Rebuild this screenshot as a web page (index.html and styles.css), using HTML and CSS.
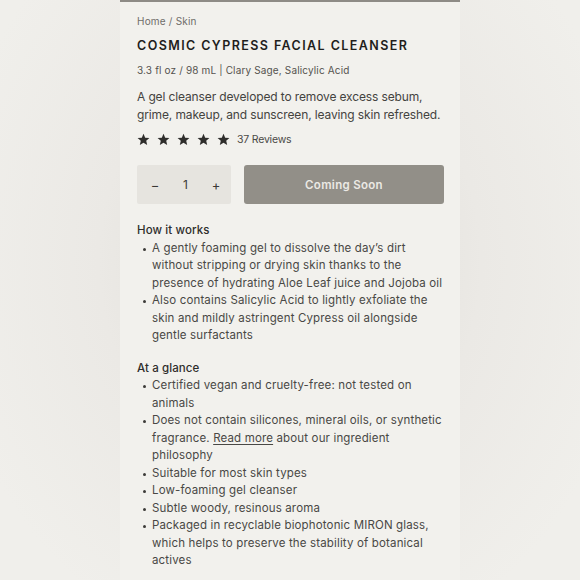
FILE: index.html
```html
<!DOCTYPE html>
<html lang="en">
<head>
<meta charset="utf-8">
<title>Cosmic Cypress Facial Cleanser</title>
<link rel="stylesheet" href="styles.css">
</head>
<body>
<main class="page">
  <div class="topbar"></div>
  <section class="product">
    <nav class="crumbs"><span>Home</span> / <span>Skin</span></nav>
    <h1 class="title">COSMIC CYPRESS FACIAL CLEANSER</h1>
    <p class="spec">3.3 fl oz / 98 mL | Clary Sage, Salicylic Acid</p>
    <p class="desc">A gel cleanser developed to remove excess sebum, grime, makeup, and sunscreen, leaving skin refreshed.</p>
    <div class="rating">
      <div class="stars">
        <svg viewBox="0 0 24 24"><path d="M12 1.5l3.1 7.2 7.8.6-5.9 5.1 1.8 7.6L12 18l-6.8 4 1.8-7.6-5.9-5.1 7.8-.6z"/></svg>
        <svg viewBox="0 0 24 24"><path d="M12 1.5l3.1 7.2 7.8.6-5.9 5.1 1.8 7.6L12 18l-6.8 4 1.8-7.6-5.9-5.1 7.8-.6z"/></svg>
        <svg viewBox="0 0 24 24"><path d="M12 1.5l3.1 7.2 7.8.6-5.9 5.1 1.8 7.6L12 18l-6.8 4 1.8-7.6-5.9-5.1 7.8-.6z"/></svg>
        <svg viewBox="0 0 24 24"><path d="M12 1.5l3.1 7.2 7.8.6-5.9 5.1 1.8 7.6L12 18l-6.8 4 1.8-7.6-5.9-5.1 7.8-.6z"/></svg>
        <svg viewBox="0 0 24 24"><path d="M12 1.5l3.1 7.2 7.8.6-5.9 5.1 1.8 7.6L12 18l-6.8 4 1.8-7.6-5.9-5.1 7.8-.6z"/></svg>
      </div>
      <span class="reviews">37 Reviews</span>
    </div>
    <div class="buy">
      <div class="qty">
        <span class="qbtn">&minus;</span>
        <span class="qval">1</span>
        <span class="qbtn">+</span>
      </div>
      <button class="cta">Coming Soon</button>
    </div>
    <h2 class="head">How it works</h2>
    <ul class="list">
      <li>A gently foaming gel to dissolve the day’s dirt without stripping or drying skin thanks to the presence of hydrating Aloe Leaf juice and Jojoba oil</li>
      <li>Also contains Salicylic Acid to lightly exfoliate the skin and mildly astringent Cypress oil alongside gentle surfactants</li>
    </ul>
    <h2 class="head head2">At a glance</h2>
    <ul class="list">
      <li>Certified vegan and cruelty-free: not tested on animals</li>
      <li>Does not contain silicones, mineral oils, or synthetic fragrance. <a class="link">Read more</a> about our ingredient philosophy</li>
      <li>Suitable for most skin types</li>
      <li>Low-foaming gel cleanser</li>
      <li>Subtle woody, resinous aroma</li>
      <li>Packaged in recyclable biophotonic MIRON glass, which helps to preserve the stability of botanical actives</li>
    </ul>
  </section>
</main>
</body>
</html>
```

FILE: styles.css
```css
html, body {
  margin: 0;
  padding: 0;
  height: 100%;
}
body {
  background: radial-gradient(ellipse 60% 70% at 50% 45%, #dedcd7 0%, #ebe9e5 55%, #f0efeb 100%);
  font-family: "Inter", "Liberation Sans", sans-serif;
  color: #3f3e3b;
  overflow: hidden;
}
.page {
  width: 340px;
  margin: 0 auto;
  min-height: 580px;
  background: #f2f1ed;
  display: flex;
  flex-direction: column;
}
.topbar {
  height: 2px;
  background: #8e8b86;
}
.product {
  padding: 12px 16px 0 17px;
}
.crumbs {
  font-size: 10px;
  color: #6f6d69;
  letter-spacing: 0.2px;
  line-height: 14px;
}
.title {
  margin: 10px 0 0;
  font-size: 12.5px;
  font-weight: 600;
  letter-spacing: 1.42px;
  color: #1f1e1c;
  line-height: 16px;
}
.spec {
  margin: 9px 0 0;
  font-size: 10px;
  color: #55534f;
  letter-spacing: 0.15px;
  line-height: 14px;
}
.desc {
  margin: 11px 0 0;
  font-size: 12px;
  line-height: 17.5px;
  letter-spacing: -0.13px;
  color: #444340;
}
.rating {
  display: flex;
  align-items: center;
  margin-top: 9px;
  height: 14px;
}
.stars {
  display: flex;
  gap: 7px;
}
.stars svg {
  width: 13px;
  height: 13px;
  fill: #2f2e2c;
}
.reviews {
  margin-left: 7px;
  font-size: 10.5px;
  color: #4a4946;
  letter-spacing: -0.2px;
}
.buy {
  display: flex;
  gap: 13px;
  margin-top: 19px;
  height: 39px;
}
.qty {
  width: 94px;
  background: #e6e4df;
  border-radius: 2px;
  display: flex;
  align-items: center;
  justify-content: space-between;
  padding: 0 10px 0 13px;
  box-sizing: border-box;
  font-size: 12px;
  color: #3a3936;
}
.qbtn {
  width: 10px;
  text-align: center;
  font-size: 13px;
}
.qval {
  font-size: 12px;
}
.cta {
  flex: 1;
  border: none;
  border-radius: 3px;
  background: #928f88;
  color: #ebe9e4;
  font-family: inherit;
  font-size: 11.5px;
  font-weight: 600;
  letter-spacing: 0.3px;
  padding: 0;
}
.head {
  margin: 18px 0 0;
  font-size: 11.5px;
  font-weight: 500;
  color: #2e2d2b;
  line-height: 17.5px;
  letter-spacing: 0.1px;
}
.head2 {
  margin-top: 15px;
}
.list {
  margin: 0 -6px 0 0;
  padding: 0 0 0 15px;
  list-style: none;
  font-size: 11.5px;
  line-height: 17.5px;
  letter-spacing: 0.15px;
  color: #494845;
}
.list li {
  position: relative;
}
.list li::before {
  content: "";
  position: absolute;
  left: -9px;
  top: 8px;
  width: 3px;
  height: 3px;
  border-radius: 50%;
  background: #3c3b38;
}
.link {
  color: inherit;
  text-decoration: underline;
  text-underline-offset: 2px;
  text-decoration-thickness: 1px;
}
```
